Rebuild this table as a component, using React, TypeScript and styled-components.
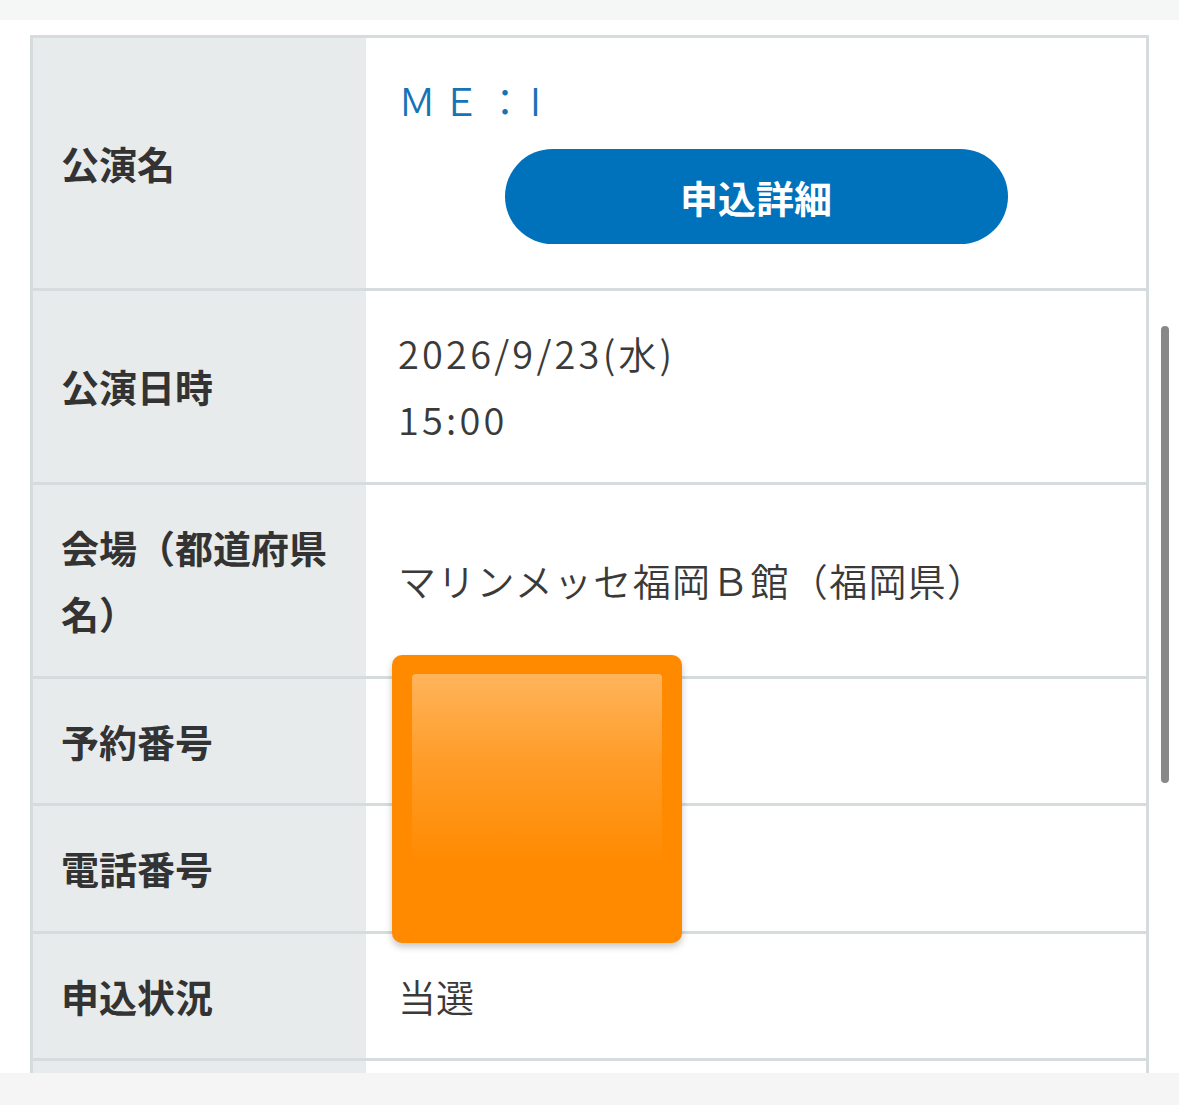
import React from "react";
import styled, { createGlobalStyle } from "styled-components";

const Global = createGlobalStyle`
  html, body { margin: 0; padding: 0; background: #ffffff; }
  body { font-family: "Noto Sans CJK JP", "Noto Sans", sans-serif; color: #333; overflow: hidden; }
`;

const Page = styled.div`
  position: relative;
  width: 1179px;
  height: 1105px;
  overflow: hidden;
  background: #fff;
`;

const TopStrip = styled.div`
  height: 20px;
  background: #f5f6f6;
`;

const Wrap = styled.div`
  padding: 15px 30px 0 30px;
`;

const Table = styled.table`
  width: 1119px;
  border-collapse: collapse;
  border: 3px solid #d6dcdd;
  table-layout: fixed;
`;

const Row = styled.tr`
  border-bottom: 3px solid #d6dcdd;
`;

const Label = styled.th`
  width: 287px;
  background: #e8ebec;
  text-align: left;
  vertical-align: middle;
  padding: 29px 18px 29px 28px;
  font-size: 38px;
  line-height: 1.75;
  font-weight: 700;
  color: #333;
`;

const Value = styled.td<{ $top?: boolean }>`
  background: #fff;
  vertical-align: ${(p) => (p.$top ? "top" : "middle")};
  padding: 29px 32px;
  font-size: 38px;
  line-height: 1.75;
  font-weight: 350;
  color: #3a3a3a;
`;

const Title = styled.div`
  color: #1673b6;
  letter-spacing: 6px;
  font-weight: 350;
`;

const DetailButton = styled.button`
  display: flex;
  align-items: center;
  justify-content: center;
  width: 503px;
  height: 95px;
  margin: 15px auto 15px;
  border: none;
  border-radius: 48px;
  background: #0072bc;
  color: #fff;
  font-family: inherit;
  font-size: 38px;
  font-weight: 700;
`;

const Line = styled.div<{ $track: number }>`
  letter-spacing: ${(p) => p.$track}px;
`;

const Mask = styled.div`
  position: absolute;
  left: 392px;
  top: 655px;
  width: 290px;
  height: 288px;
  border-radius: 10px;
  background: #ff8a00;
  box-shadow: 0 4px 7px rgba(0, 0, 0, 0.22);
`;

const Gloss = styled.div`
  position: absolute;
  left: 20px;
  top: 19px;
  width: 250px;
  height: 190px;
  border-radius: 4px;
  background: linear-gradient(
    to bottom,
    rgba(255, 255, 255, 0.36) 0%,
    rgba(255, 255, 255, 0.16) 45%,
    rgba(255, 255, 255, 0) 100%
  );
`;

const Scrollbar = styled.div`
  position: absolute;
  left: 1161px;
  top: 326px;
  width: 8px;
  height: 457px;
  border-radius: 4px;
  background: #888;
`;

const BottomBar = styled.div`
  position: absolute;
  left: 0;
  bottom: 0;
  width: 100%;
  height: 32px;
  background: #f5f5f5;
`;

const rows: { label: React.ReactNode; value: React.ReactNode }[] = [
  {
    label: "公演日時",
    value: (
      <>
        <Line $track={3.2}>2026/9/23(水)</Line>
        <Line $track={3.2}>15:00</Line>
      </>
    ),
  },
  {
    label: "会場（都道府県名）",
    value: <Line $track={1.3}>マリンメッセ福岡Ｂ館（福岡県）</Line>,
  },
  { label: "予約番号", value: "" },
  { label: "電話番号", value: "" },
  { label: "申込状況", value: <Line $track={0}>当選</Line> },
  { label: "\u00a0", value: "" },
];

export default function App() {
  return (
    <Page>
      <Global />
      <TopStrip />
      <Wrap>
        <Table>
          <tbody>
            <Row>
              <Label>公演名</Label>
              <Value $top>
                <Title>ＭＥ：I</Title>
                <DetailButton>申込詳細</DetailButton>
              </Value>
            </Row>
            {rows.map((r, i) => (
              <Row key={i}>
                <Label>{r.label}</Label>
                <Value>{r.value || "\u00a0"}</Value>
              </Row>
            ))}
          </tbody>
        </Table>
      </Wrap>
      <Mask>
        <Gloss />
      </Mask>
      <Scrollbar />
      <BottomBar />
    </Page>
  );
}
